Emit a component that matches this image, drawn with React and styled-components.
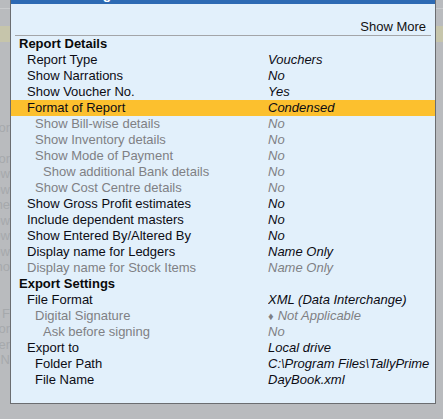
import React from 'react';
import styled, { createGlobalStyle } from 'styled-components';

const GlobalStyle = createGlobalStyle`
html, body {
    margin:0;
    padding:0;
    background:#b9bbbe;
    font-family:"Liberation Sans", Arial, sans-serif;
}
`;

const Page = styled.div`
position:relative;
width:443px;
height:419px;
overflow:hidden;
background:#b9bbbe;
`;

const Backdrop = styled.div`
display:flex;
flex-direction:column;
padding-top:9px;
border-top:1px solid #c9cbcd;
margin-top:8px;
`;

const BackdropBand = styled.div`
height:16px;
margin-top:8px;
background:#c6c5ab;
`;

const BackdropLine = styled.div`
width:10px;
height:15.5px;
overflow:hidden;
white-space:nowrap;
direction:rtl;
font-size:13px;
line-height:15.5px;
color:#a6a9ac;
`;

const Dialog = styled.div`
position:absolute;
left:10px;
top:0;
width:424px;
background:#e2f0fb;
border:1px solid #6b6d70;
border-top:none;
`;

const TitleBar = styled.div`
height:4px;
overflow:hidden;
background:#2d6ab3;
color:#fff;
font-weight:bold;
font-size:14px;
line-height:16px;
padding-left:10px;
span{
    display:block;
    margin-top:-14px;
}
`;

const Body = styled.div`
padding:15px 0 15px 0;
`;

const ShowMore = styled.div`
height:16px;
margin:0 4px;
padding-right:5px;
border-bottom:1px solid #a3a5a8;
text-align:right;
font-size:13px;
line-height:16px;
color:#111;
`;

const Row = styled.div`
display:grid;
grid-template-columns:257px 1fr;
height:16px;
font-size:13px;
line-height:16px;
background:${props => props.$active ? '#fcc02e' : 'transparent'};
color:${props => props.$muted ? '#7f8084' : '#0c0c14'};
`;

const Label = styled.div`
padding-left:${props => 16 + props.$level * 8}px;
white-space:nowrap;
overflow:hidden;
`;

const Value = styled.div`
font-style:italic;
white-space:nowrap;
overflow:hidden;
`;

const Heading = styled.div`
height:16px;
padding-left:8px;
font-size:13px;
line-height:16px;
font-weight:bold;
color:#0a0a0a;
`;

const Diamond = styled.span`
font-style:normal;
font-size:11px;
margin-right:4px;
`;

const backdropText = [
    "", "", "", "", "", "Vendor", "", "Vendor", "Show", "Show", "Name",
    "Show", "Show", "Show", "Sho", "", "", "F", "For", "Ver", "N"
];

const sections = [
    {
        title: "Report Details",
        rows: [
            { label: "Report Type", value: "Vouchers", level: 0 },
            { label: "Show Narrations", value: "No", level: 0 },
            { label: "Show Voucher No.", value: "Yes", level: 0 },
            { label: "Format of Report", value: "Condensed", level: 0, active: true },
            { label: "Show Bill-wise details", value: "No", level: 1, muted: true },
            { label: "Show Inventory details", value: "No", level: 1, muted: true },
            { label: "Show Mode of Payment", value: "No", level: 1, muted: true },
            { label: "Show additional Bank details", value: "No", level: 2, muted: true },
            { label: "Show Cost Centre details", value: "No", level: 1, muted: true },
            { label: "Show Gross Profit estimates", value: "No", level: 0 },
            { label: "Include dependent masters", value: "No", level: 0 },
            { label: "Show Entered By/Altered By", value: "No", level: 0 },
            { label: "Display name for Ledgers", value: "Name Only", level: 0 },
            { label: "Display name for Stock Items", value: "Name Only", level: 0, muted: true },
        ]
    },
    {
        title: "Export Settings",
        rows: [
            { label: "File Format", value: "XML (Data Interchange)", level: 0 },
            { label: "Digital Signature", value: "Not Applicable", level: 1, muted: true, diamond: true },
            { label: "Ask before signing", value: "No", level: 2, muted: true },
            { label: "Export to", value: "Local drive", level: 0 },
            { label: "Folder Path", value: "C:\\Program Files\\TallyPrime", level: 1 },
            { label: "File Name", value: "DayBook.xml", level: 1 },
        ]
    }
];

const App = () => {
    return(
        <Page>
            <GlobalStyle/>
            <Backdrop>
                <BackdropBand/>
                {backdropText.map((t, i) => (
                    <BackdropLine key={i}>{t}</BackdropLine>
                ))}
            </Backdrop>
            <Dialog>
                <TitleBar><span>List of Configurations</span></TitleBar>
                <Body>
                    <ShowMore>Show More</ShowMore>
                    {sections.map(section => (
                        <div key={section.title}>
                            <Heading>{section.title}</Heading>
                            {section.rows.map(row => (
                                <Row key={row.label} $active={row.active} $muted={row.muted}>
                                    <Label $level={row.level}>{row.label}</Label>
                                    <Value>
                                        {row.diamond && <Diamond>♦</Diamond>}
                                        {row.value}
                                    </Value>
                                </Row>
                            ))}
                        </div>
                    ))}
                </Body>
            </Dialog>
        </Page>
    )
};
export default App;
